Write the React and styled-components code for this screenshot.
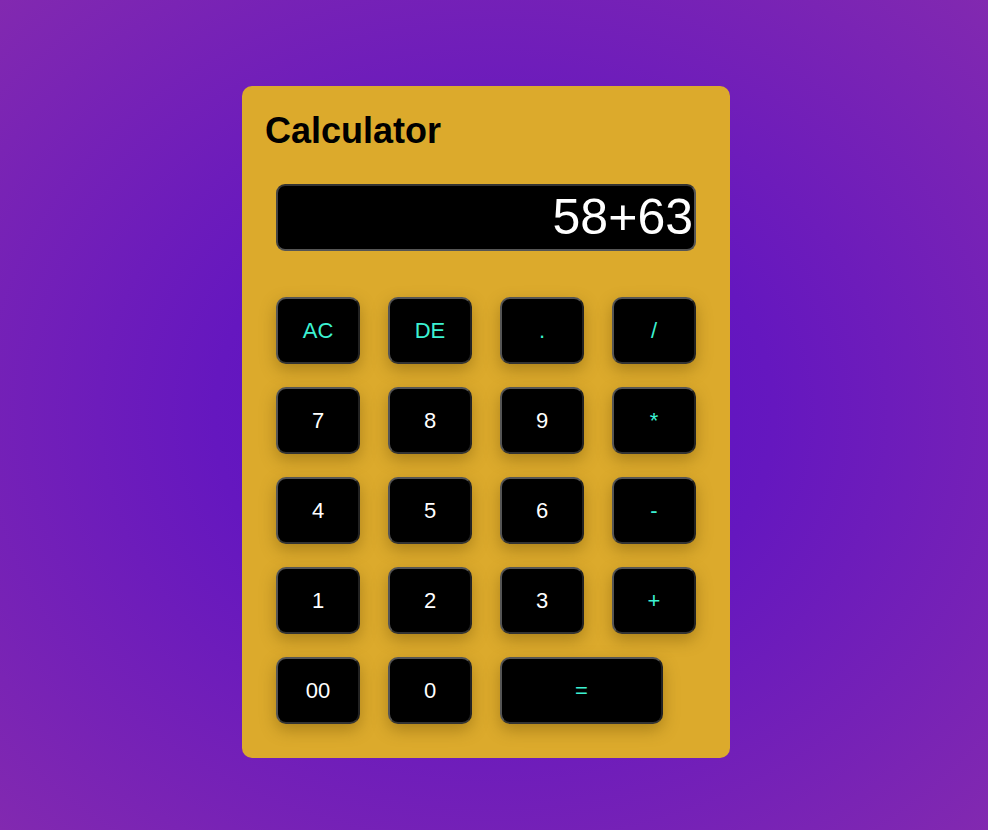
import React, { useState } from "react"
import styled, { createGlobalStyle } from "styled-components"

const GlobalStyle = createGlobalStyle`
	html, body {
		margin: 0;
		padding: 0;
	}
	body {
		font-family: "Liberation Sans", Arial, sans-serif;
		background: radial-gradient(ellipse at center, #5810c6 0%, #6517bf 40%, #8229b0 100%);
		min-height: 100vh;
	}
`

const keys = [
	{ label: "AC", op: true },
	{ label: "DE", op: true },
	{ label: ".", op: true },
	{ label: "/", op: true },
	{ label: "7" },
	{ label: "8" },
	{ label: "9" },
	{ label: "*", op: true },
	{ label: "4" },
	{ label: "5" },
	{ label: "6" },
	{ label: "-", op: true },
	{ label: "1" },
	{ label: "2" },
	{ label: "3" },
	{ label: "+", op: true },
	{ label: "00" },
	{ label: "0" },
	{ label: "=", op: true, wide: true },
]

const App = () => {
	const [value, setValue] = useState("58+63")

	const press = (label) => {
		if (label === "AC") return setValue("")
		if (label === "DE") return setValue(v => v.slice(0, -1))
		if (label === "=") {
			try {
				// eslint-disable-next-line no-new-func
				setValue(v => String(Function(`return (${v})`)()))
			} catch (e) {
				setValue("Error")
			}
			return
		}
		setValue(v => v + label)
	}

	return (
		<>
			<GlobalStyle />
			<Page>
				<Card>
					<Title>Calculator</Title>
					<Body>
						<Display>{value}</Display>
						<Keypad>
							{keys.map(k => (
								<Key
									key={k.label}
									$op={k.op}
									$wide={k.wide}
									onClick={() => press(k.label)}
								>
									{k.label}
								</Key>
							))}
						</Keypad>
					</Body>
				</Card>
			</Page>
		</>
	)
}

const Page = styled.div`
	display: flex;
	justify-content: center;
	align-items: flex-start;
	padding: 86px 16px 0 0;
	box-sizing: border-box;
	min-height: 100vh;
`

const Card = styled.div`
	width: 488px;
	height: 672px;
	box-sizing: border-box;
	background: #dcaa2c;
	border-radius: 10px;
	padding: 24px 22px 34px;
`

const Title = styled.h1`
	margin: 0 0 32px 1px;
	font-size: 36px;
	font-weight: 700;
	color: #000;
`

const Body = styled.div`
	padding: 0 12px;
	display: flex;
	flex-direction: column;
	gap: 46px;
`

const Display = styled.div`
	height: 67px;
	box-sizing: border-box;
	background: #000;
	color: #fff;
	border: 2px solid #555;
	border-top-color: #333;
	border-left-color: #444;
	border-radius: 9px;
	font-size: 50px;
	line-height: 62px;
	text-align: right;
	padding: 0 1px;
	overflow: hidden;
	white-space: nowrap;
`

const Keypad = styled.div`
	display: grid;
	grid-template-columns: repeat(4, 84px);
	grid-auto-rows: 67px;
	column-gap: 28px;
	row-gap: 23px;
`

const Key = styled.button`
	grid-column: ${p => p.$wide ? "span 2" : "auto"};
	width: ${p => p.$wide ? "163px" : "84px"};
	height: 67px;
	box-sizing: border-box;
	background: #000;
	color: ${p => p.$op ? "#3cf2d2" : "#fff"};
	border: 2px solid #555;
	border-right-color: #222;
	border-bottom-color: #333;
	border-radius: 10px;
	font-family: "Liberation Sans", Arial, sans-serif;
	font-size: 22px;
	cursor: pointer;
	box-shadow: 0 6px 16px rgba(100, 70, 0, 0.4);
	padding: 0;

	&:active {
		transform: scale(0.96);
	}
`

export default App
